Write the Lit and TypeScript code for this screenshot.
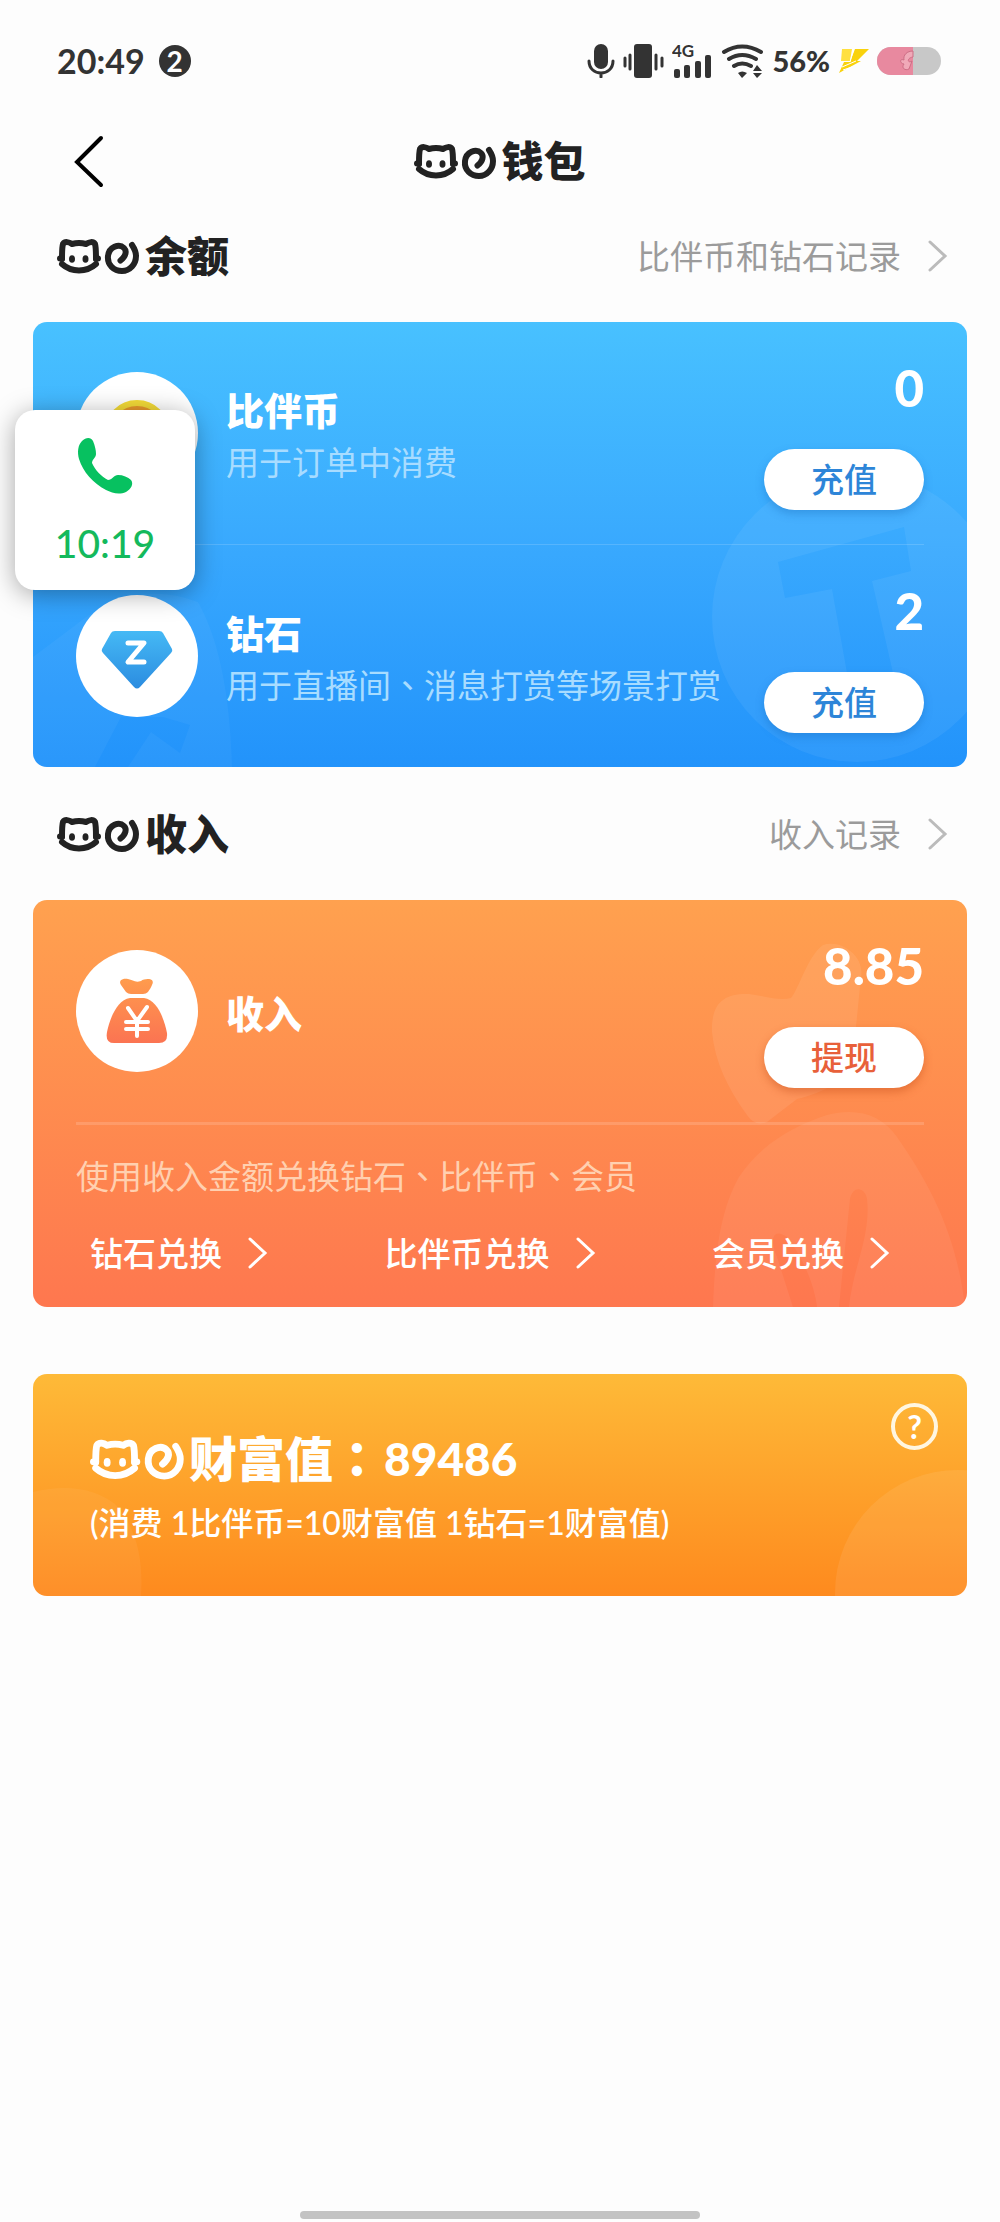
import { LitElement, html, css, svg } from "lit";
import { customElement, property } from "lit/decorators.js";

const base = css`
  *, *::before { box-sizing: border-box; }
  button, a { font: inherit; color: inherit; text-decoration: none; }
  button { border: 0; padding: 0; background: none; cursor: pointer; }
  h1, h2, h3, p { margin: 0; font-weight: inherit; font-size: inherit; }
  svg { display: block; flex: none; }
  /* Punctuation that sits in the middle of its cell. */
  .mid { font-family: "Noto Sans CJK TC", sans-serif; line-height: 0; }
`;

/* Cat face and spiral that lead every heading; size follows the text. */
@customElement("cat-mark")
class CatMark extends LitElement {
  static styles = [base, css`
    :host { display: block; flex: none; }
    .mark { height: 1em; width: 2em; fill: none; stroke: currentColor; stroke-linecap: round; stroke-linejoin: round; stroke-width: 6; }
    .dot { fill: currentColor; stroke: none; }
  `];
  render() {
    return html`<svg class="mark" viewBox="0 0 84 42" aria-hidden="true">
      <path d="M5 24 C5 16 5 12 6 9 C8 6 12 7 15 9 Q22 7 29 9 C32 7 36 6 38 9 C39 12 39 16 39 24" />
      <path d="M5 29 C10 33.500 15 35.500 22 35.500 C29 35.500 34 33.500 39 29" />
      <path d="M3 23.500 H5 M39 23.500 H41" />
      <ellipse class="dot" cx="15" cy="24" rx="3" ry="3.800" />
      <ellipse class="dot" cx="28.500" cy="24" rx="3" ry="3.800" />
      <path d="M63.500 25.500 C69 21 70 16 67 13 C62 8 52 12 51 21 C50 30 57 36 65 36 C73 36 79 29 79 21 C79 16 77 13 75 10" />
    </svg>`;
  }
}

@customElement("chevron-icon")
class ChevronIcon extends LitElement {
  static styles = [base, css`
    :host { display: block; flex: none; }
    .shape { width: 20px; height: 34px; fill: none; stroke: currentColor; stroke-width: 3; stroke-linecap: round; }
  `];
  render() {
    return html`<svg class="shape" viewBox="0 0 20 34" aria-hidden="true"><path d="M2 3 L17 17 L2 31" /></svg>`;
  }
}

@customElement("status-bar")
class StatusBar extends LitElement {
  static styles = [base, css`
    :host { display: flex; align-items: center; justify-content: space-between; padding: 44px 59px 55px 57px; color: #333; font-weight: 700; font-size: 34px; line-height: 34px; }
    .side { display: flex; align-items: center; gap: 14px; }
    .badge { width: 32px; height: 32px; border-radius: 50%; background: #333; color: #fff; font-size: 28px; line-height: 32px; text-align: center; }
    .icons { gap: 8px; }
    .ink { fill: currentColor; stroke: none; }
    .line { fill: none; stroke: currentColor; stroke-width: 3; stroke-linecap: round; }
    .wide { stroke-width: 4; }
    .signal { margin: -8px 0; }
    .net { font-size: 17px; font-weight: 700; }
    .power { font-size: 29px; font-weight: 900; }
  `];
  render() {
    return html`
      <div class="side"><span>20:49</span><span class="badge">2</span></div>
      <div class="side icons">
        <svg width="28" height="34" viewBox="0 0 28 34" aria-hidden="true">
          <rect class="ink" x="7" y="0" width="14" height="25" rx="7" />
          <path class="line" d="M2 17 C2 33 26 33 26 17 M14 29 V33" />
        </svg>
        <svg width="41" height="34" viewBox="0 0 41 34" aria-hidden="true">
          <rect class="ink" x="11" y="0" width="18" height="34" rx="3" />
          <path class="line" d="M7 11 V25 M2 14 V22 M33 11 V25 M39 14 V22" />
        </svg>
        <svg class="signal" width="41" height="50" viewBox="0 -8 41 50" aria-hidden="true">
          <text class="ink net" x="0" y="13">4G</text>
          <rect class="ink" x="2" y="25" width="6" height="9" rx="2" />
          <rect class="ink" x="12" y="21" width="6" height="13" rx="2" />
          <rect class="ink" x="23" y="17" width="6" height="17" rx="2" />
          <rect class="ink" x="33" y="11" width="6" height="23" rx="2" />
        </svg>
        <svg width="43" height="34" viewBox="0 0 43 34" aria-hidden="true">
          <path class="line wide" d="M3 8 Q21 -3 40 8 M8 15 Q21 7 35 15 M13 22 Q21 17 30 22" />
          <path class="ink" d="M17 29 Q21 26 26 29 L21 34 Z M36 21 L41 27 H32 Z M32 29 H41 L36 34 Z" />
        </svg>
        <span class="power">56%</span>
        <svg width="31" height="26" viewBox="0 0 31 26" aria-hidden="true">
          <path fill="#ffe040" d="M4 1 H14 L12 13 H3 Z" />
          <path fill="#f9d20c" d="M17 1 H31 L19 13 H23 L1 25 L6 14 H12 Z" />
          <path fill="none" stroke="#fff" stroke-width="1" d="M16 0 L12 14 M18 13 L4 19 M14 19 L5 22" />
        </svg>
        <svg width="64" height="28" viewBox="0 0 64 28" aria-hidden="true">
          <rect width="64" height="28" rx="14" fill="#c8c8c8" />
          <path d="M14 0 H36 V28 H14 A14 14 0 0 1 14 0 Z" fill="#e8899f" />
          <path d="M36 4 C30 4 26 8 27 13 C22 11 23 17 27 17 C24 21 28 24 32 22 L35 14 C31 17 29 11 36 10 Z" fill="#f0a9b8" stroke="#cd6e85" stroke-width="1" />
        </svg>
      </div>`;
  }
}

@customElement("section-head")
class SectionHead extends LitElement {
  @property() heading = "";
  @property() link = "";
  static styles = [base, css`
    :host { display: flex; align-items: center; justify-content: space-between; height: 133px; padding: 0 52px 0 57px; }
    .heading { display: flex; align-items: center; gap: 4px; font-size: 42px; line-height: 60px; font-weight: 900; color: #222; }
    .link { display: flex; align-items: center; gap: 27px; font-size: 33px; line-height: 48px; color: #9b9b9b; }
    .arrow { color: #bbb; }
  `];
  render() {
    return html`
      <h2 class="heading"><cat-mark></cat-mark>${this.heading}</h2>
      <a class="link" href="#">${this.link}<chevron-icon class="arrow"></chevron-icon></a>`;
  }
}

/* One account line: round icon, name and note, amount with an action. */
@customElement("account-row")
class AccountRow extends LitElement {
  @property() name = "";
  @property() note = "";
  @property() amount = "";
  @property() action = "";
  static styles = [base, css`
    :host { display: flex; align-items: center; gap: 28px; height: 222px; padding: 0 43px; position: relative; }
    .disc { flex: none; display: grid; place-items: center; width: 122px; height: 122px; border-radius: 50%; background: #fff; }
    .words { flex: 1; min-width: 0; padding-top: 3px; white-space: nowrap; }
    .name { font-size: 38px; line-height: 54px; font-weight: 900; color: #fff; }
    .note { font-size: 33px; line-height: 50px; color: var(--note); }
    .side { align-self: stretch; display: flex; flex-direction: column; align-items: flex-end; gap: 31px; padding-top: 36px; }
    .amount { font-size: 51px; line-height: 60px; font-weight: 900; color: #fff; }
    .action { width: 160px; height: 61px; border-radius: 31px; background: #fff; color: var(--action); font-size: 33px; font-weight: 500; line-height: 61px; box-shadow: 0 4px 8px var(--shade); }
  `];
  render() {
    const parts = this.note.split("、");
    return html`
      <span class="disc"><slot></slot></span>
      <div class="words">
        <h3 class="name">${this.name}</h3>
        ${this.note ? html`<p class="note">${parts.map((p, i) => html`${i ? html`<span class="mid" lang="zh-TW">、</span>` : ""}${p}`)}</p>` : ""}
      </div>
      <div class="side">
        <strong class="amount">${this.amount}</strong>
        <button class="action">${this.action}</button>
      </div>`;
  }
}

const EXCHANGES = ["钻石兑换", "比伴币兑换", "会员兑换"];

const coin = svg`
  <svg width="66" height="66" viewBox="0 0 66 66" aria-hidden="true">
    <circle cx="33" cy="33" r="30" fill="#e9992c" stroke="#f5dc38" stroke-width="6" />
  </svg>`;

const gem = svg`
  <svg width="72" height="70" viewBox="0 -8 72 70" aria-hidden="true">
    <defs><linearGradient id="g" x2="0" y2="1"><stop stop-color="#45b9f5" /><stop offset="1" stop-color="#2b8ce0" /></linearGradient></defs>
    <path d="M14 2 H58 Q61 2 62 4 L71 20 Q72 22 70 24 L39 58 Q36 61 33 58 L2 24 Q0 22 1 20 L10 4 Q11 2 14 2 Z" fill="url(#g)" />
    <path d="M27 14 H43 L27 33 H43" fill="none" stroke="#fff" stroke-width="5" stroke-linecap="round" stroke-linejoin="round" />
  </svg>`;

const bag = svg`
  <svg width="62" height="66" viewBox="0 0 62 66" aria-hidden="true">
    <defs><linearGradient id="b" gradientUnits="userSpaceOnUse" x1="0" y1="0" x2="0" y2="66"><stop stop-color="#ff9c4d" /><stop offset="1" stop-color="#fb7352" /></linearGradient></defs>
    <path d="M20 14 L15 7 C12 2 17 0 22 1 C27 2 29 5 35 3 C39 0 50 0 46 7 C45 10 43 12 42 14 Q40 16 37 16 H25 Q22 16 20 14 Z" fill="url(#b)" />
    <path d="M24 20 H38 C51 22 58 40 61 55 Q62 65 53 65 H8 Q-1 65 1 54 C4 40 11 22 24 20 Z" fill="url(#b)" />
    <path d="M22 30 L31 43 L41 29 M20 44 H42 M20 51 H42 M31 43 V58" fill="none" stroke="#fff" stroke-width="4" stroke-linecap="round" />
  </svg>`;

@customElement("app-root")
class AppRoot extends LitElement {
  static styles = [base, css`
    :host { display: flex; flex-direction: column; position: relative; min-height: 100vh; background: #fdfdfd; font-family: Lato, "Noto Sans CJK SC", sans-serif; overflow: hidden; }
    .bar { display: grid; grid-template-columns: 1fr auto 1fr; align-items: center; height: 56px; padding: 0 70px; }
    .back { justify-self: start; }
    .title { display: flex; align-items: center; gap: 3px; font-size: 42px; line-height: 56px; font-weight: 900; color: #222; }
    .card { position: relative; overflow: hidden; margin: 0 33px; border-radius: 14px; }
    .blue { --note: #a8dcff; --action: #2d85d8; --shade: rgba(20, 100, 180, 0.35); background: linear-gradient(#48c1ff, #39a9fe 50%, #2293fb); }
    .coral { --note: #ffd0b0; --action: #e8603a; --shade: rgba(190, 70, 20, 0.4); background: linear-gradient(#ffa14f, #fe774f); }
    .gold { display: flex; align-items: flex-start; justify-content: space-between; margin-top: 67px; padding: 29px 29px 50px 57px; background: linear-gradient(#feba38, #fe8a1e); color: #fff; }
    .decor { position: absolute; right: 0; bottom: 0; fill: #fff; }
    .decor-left { right: auto; left: 0; }
    .rule { position: relative; height: 1px; margin: 0 43px; background: rgba(255, 255, 255, 0.15); }
    .thick { height: 3px; }
    .hint { position: relative; padding: 26px 43px 0; font-size: 33px; line-height: 50px; color: var(--note); }
    .swaps { position: relative; display: flex; justify-content: space-between; padding: 27px 77px 29px 57px; }
    .swap { display: flex; align-items: center; gap: 26px; font-size: 33px; line-height: 50px; font-weight: 500; color: #fff; }
    .wealth { position: relative; display: grid; gap: 11px; padding-top: 26px; }
    .worth { display: flex; align-items: center; gap: 3px; font-size: 48px; line-height: 60px; font-weight: 900; }
    .score { font-size: 46px; }
    .rate { font-size: 32px; line-height: 46px; font-weight: 500; }
    .help { position: relative; display: grid; place-items: center; width: 47px; height: 47px; border: 4px solid #fff6e0; border-radius: 50%; font-size: 32px; font-weight: 700; line-height: 39px; }
    .call { position: absolute; left: 15px; top: 410px; display: flex; flex-direction: column; align-items: center; justify-content: space-between; width: 180px; height: 180px; padding: 27px 0 22px; border-radius: 20px; background: #fff; color: #14b95c; font-size: 39px; font-weight: 500; line-height: 50px; box-shadow: 0 4px 26px rgba(0, 0, 0, 0.35); }
    .home { width: 40%; height: 8px; margin: auto auto 3px; border-radius: 4px; background: #c3c3c3; }
  `];

  render() {
    return html`
      <status-bar></status-bar>
      <header class="bar">
        <button class="back" aria-label="返回">
          <svg width="36" height="54" viewBox="0 0 36 54" aria-hidden="true"><path d="M31 4 L7 28 L31 51" fill="none" stroke="#000" stroke-width="4" stroke-linecap="round" /></svg>
        </button>
        <h1 class="title"><cat-mark></cat-mark>钱包</h1>
      </header>

      <section-head heading="余额" link="比伴币和钻石记录"></section-head>
      <section class="card blue">
        <svg class="decor" width="260" height="300" viewBox="0 0 260 300" aria-hidden="true">
          <path fill-rule="evenodd" opacity=".06" d="M5 150 A145 145 0 1 1 295 150 A145 145 0 1 1 5 150 Z M71 95 L197 60 L204 104 L165 114 L186 206 L140 206 L125 122 L78 131 Z" />
        </svg>
        <svg class="decor decor-left" width="200" height="180" viewBox="0 0 200 180" aria-hidden="true">
          <path fill-rule="evenodd" opacity=".04" d="M0 70 L40 40 Q100 -10 165 15 Q196 70 199 180 H95 L118 145 L147 166 L157 138 L130 130 H88 L62 180 H0 Z" />
        </svg>
        <account-row name="比伴币" note="用于订单中消费" amount="0" action="充值">${coin}</account-row>
        <div class="rule"></div>
        <account-row name="钻石" note="用于直播间、消息打赏等场景打赏" amount="2" action="充值">${gem}</account-row>
      </section>

      <section-head heading="收入" link="收入记录"></section-head>
      <section class="card coral">
        <svg class="decor" width="260" height="370" viewBox="0 0 260 370" aria-hidden="true">
          <path opacity=".08" d="M5 95 C4 65 18 56 42 57 C58 59 72 64 84 61 C92 52 100 20 116 8 C135 2 158 20 154 40 L148 100 C150 140 120 155 90 162 L60 185 Q48 190 40 178 C20 150 8 125 5 95 Z" />
          <path fill-rule="evenodd" opacity=".06" d="M6 370 C8 310 15 270 32 240 C55 205 90 188 120 178 C150 170 175 178 190 200 C225 250 250 300 258 370 H142 C146 330 164 300 160 262 C158 250 146 248 143 262 L132 370 H110 C108 350 96 320 80 300 C66 290 62 302 70 320 L86 370 Z" />
        </svg>
        <account-row name="收入" amount="8.85" action="提现">${bag}</account-row>
        <div class="rule thick"></div>
        <p class="hint">使用收入金额兑换钻石<span class="mid" lang="zh-TW">、</span>比伴币<span class="mid" lang="zh-TW">、</span>会员</p>
        <nav class="swaps">
          ${EXCHANGES.map((label) => html`<a class="swap" href="#">${label}<chevron-icon></chevron-icon></a>`)}
        </nav>
      </section>

      <section class="card gold">
        <svg class="decor" width="132" height="126" viewBox="0 0 132 126" aria-hidden="true"><circle cx="123" cy="123" r="123" opacity=".08" /></svg>
        <svg class="decor decor-left" width="110" height="110" viewBox="0 0 110 110" aria-hidden="true"><path opacity=".05" d="M0 6 Q50 -6 82 18 Q112 50 108 110 H0 Z" /></svg>
        <div class="wealth">
          <h2 class="worth"><cat-mark></cat-mark><span>财富值<span class="mid" lang="zh-TW">：</span></span><span class="score">89486</span></h2>
          <p class="rate">(消费 1比伴币=10财富值 1钻石=1财富值)</p>
        </div>
        <button class="help">?</button>
      </section>

      <div class="home"></div>

      <button class="call">
        <svg width="58" height="58" viewBox="0 0 58 58" fill="#07c160" aria-hidden="true">
          <path d="M6 4 C10 0 15 0 17 4 C19 9 20 13 20 17 C20 21 16 22 16 26 C19 33 25 39 32 43 C36 43 38 38 42 38 C47 38 52 40 55 43 C58 47 55 52 50 55 C43 58 36 56 30 53 C17 46 7 35 3 22 C1 15 2 8 6 4 Z" />
        </svg>
        10:19
      </button>`;
  }
}
